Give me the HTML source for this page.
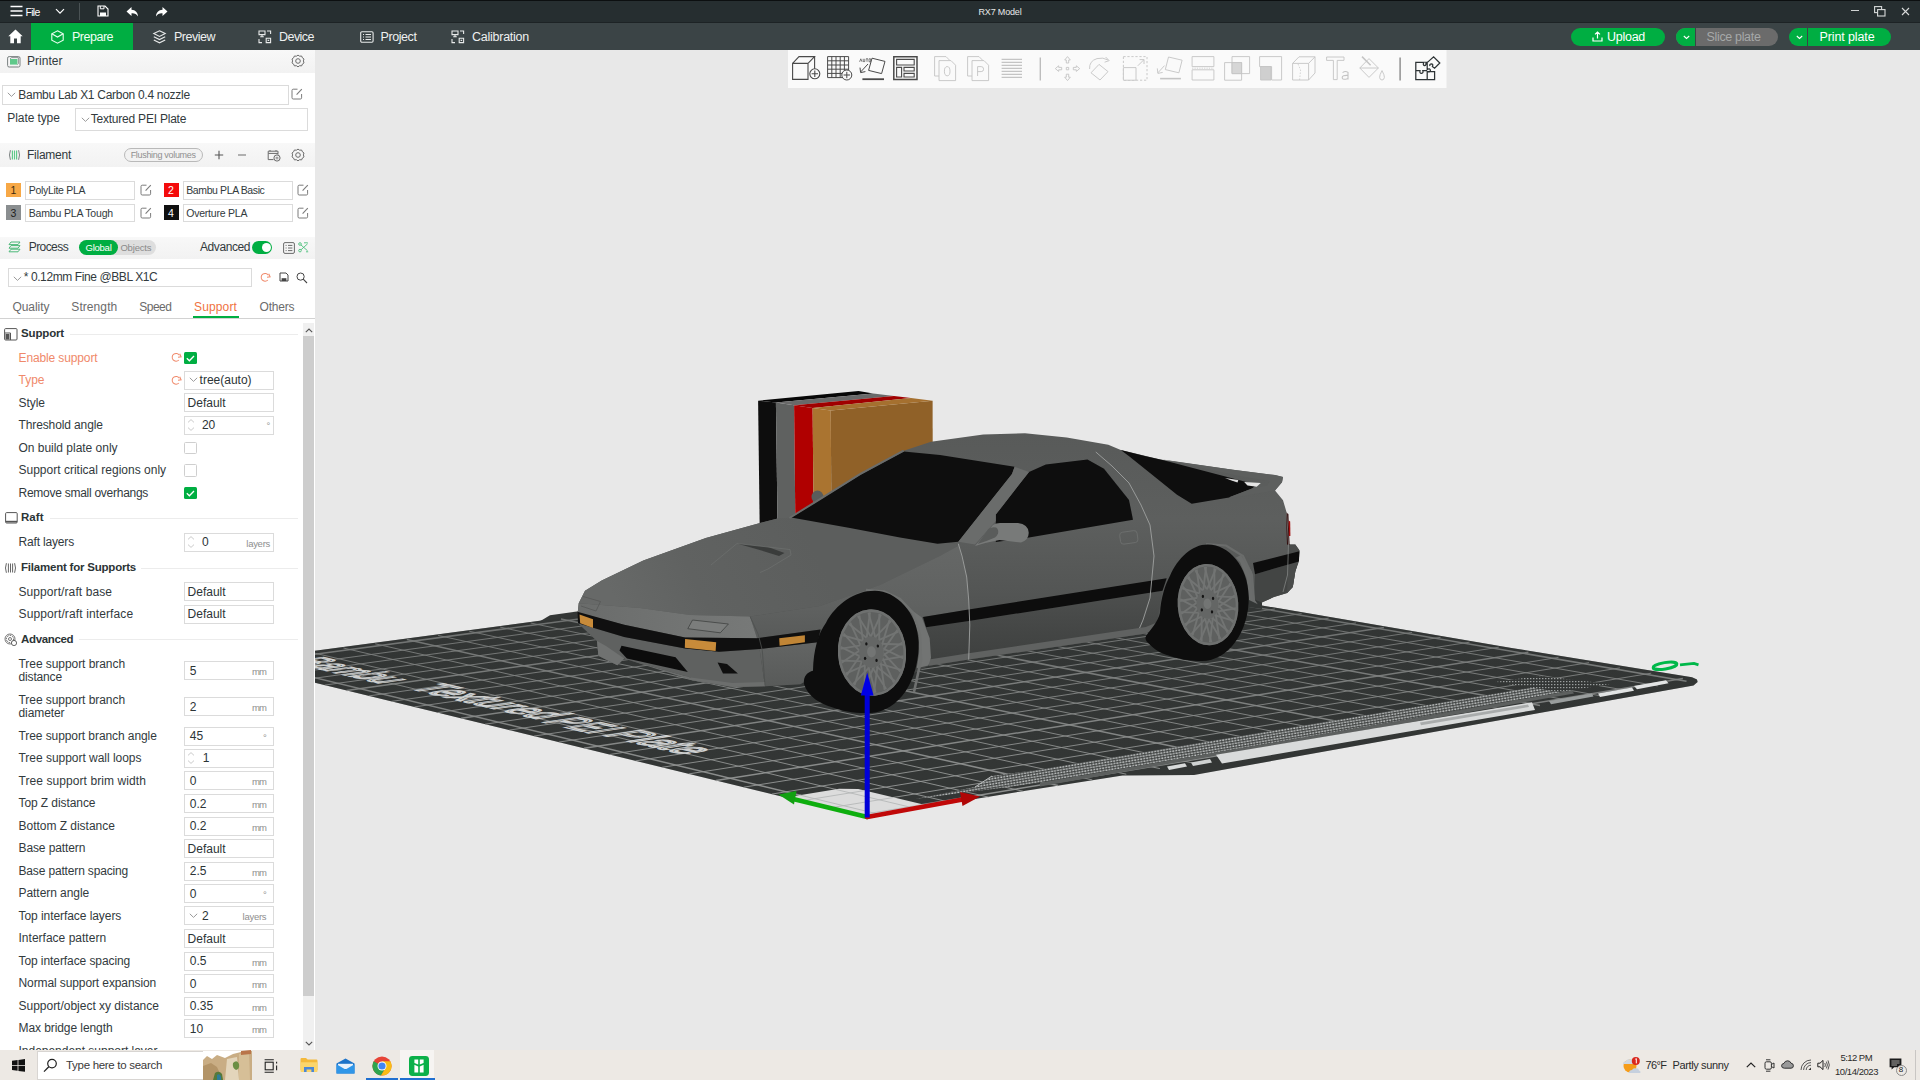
<!DOCTYPE html>
<html><head><meta charset="utf-8"><title>RX7 Model</title><style>html,body{margin:0;padding:0;}
body{width:1920px;height:1080px;overflow:hidden;position:relative;background:#e8e8e8;font-family:"Liberation Sans",sans-serif;}
.b{position:absolute;display:block;}
.t{position:absolute;white-space:nowrap;}
svg{overflow:visible;}
#side{position:absolute;left:0;top:0;width:315px;height:1050px;overflow:hidden;}
</style></head><body>
<svg class="b" style="left:315px;top:50px;overflow:hidden" width="1605" height="1000" viewBox="315 50 1605 1000"><defs><pattern id="dots" width="3" height="2.6" patternUnits="userSpaceOnUse" patternTransform="rotate(-9.5)"><rect width="3" height="2.6" fill="#3c3f3e"/><rect x="0.3" y="0.3" width="2" height="1.5" fill="#c3c6c6"/></pattern><pattern id="dots2" width="3" height="3" patternUnits="userSpaceOnUse"><rect width="3" height="3" fill="#333635"/><rect x="0" y="0" width="1.4" height="1.2" fill="#9a9e9e"/></pattern><linearGradient id="body" x1="0" y1="430" x2="0" y2="680" gradientUnits="userSpaceOnUse"><stop offset="0" stop-color="#585a59"/><stop offset="0.36" stop-color="#5d5f5e"/><stop offset="0.66" stop-color="#535554"/><stop offset="0.8" stop-color="#4b4d4c"/><stop offset="1" stop-color="#404241"/></linearGradient><linearGradient id="hood" x1="800" y1="520" x2="620" y2="610" gradientUnits="userSpaceOnUse"><stop offset="0" stop-color="#5c5e5d"/><stop offset="0.6" stop-color="#606261"/><stop offset="1" stop-color="#676968"/></linearGradient><linearGradient id="fender" x1="0" y1="550" x2="0" y2="640" gradientUnits="userSpaceOnUse"><stop offset="0" stop-color="#656766"/><stop offset="0.6" stop-color="#606261"/><stop offset="1" stop-color="#585a59"/></linearGradient><linearGradient id="bside" x1="0" y1="642" x2="0" y2="686" gradientUnits="userSpaceOnUse"><stop offset="0" stop-color="#636564"/><stop offset="1" stop-color="#585a59"/></linearGradient><linearGradient id="sidelow" x1="0" y1="590" x2="0" y2="660" gradientUnits="userSpaceOnUse"><stop offset="0" stop-color="#4e504f"/><stop offset="0.6" stop-color="#444645"/><stop offset="1" stop-color="#3e403f"/></linearGradient><linearGradient id="fascia" x1="580" y1="0" x2="757" y2="0" gradientUnits="userSpaceOnUse"><stop offset="0" stop-color="#6a6c6b"/><stop offset="0.5" stop-color="#717372"/><stop offset="1" stop-color="#777978"/></linearGradient><linearGradient id="fog" x1="0" y1="560" x2="0" y2="820" gradientUnits="userSpaceOnUse"><stop offset="0" stop-color="#303332" stop-opacity="0.5"/><stop offset="0.45" stop-color="#313433" stop-opacity="0.3"/><stop offset="1" stop-color="#333635" stop-opacity="0.05"/></linearGradient></defs><rect x="315" y="50" width="1605" height="1000" fill="#e8e8e8"/><polygon points="867.0,817.3 978.0,798.5 1040.0,788.5 1122.5,775.5 1194.0,775.0 1400.0,738.0 1693.5,685.5 1697.6,682.0 1697.0,679.5 1692.0,677.3 1511.5,648.0 995.0,560.0 230.0,662.0 867.0,817.3" fill="#333635" /><polygon points="540.0,621.2 550.0,615.2 577.0,611.6 700.0,596.0 700.0,605.0" fill="#333635" /><g stroke="#a2a4a3" stroke-opacity="0.9"><line x1="881.5" y1="814.9" x2="246.2" y2="661.0" stroke-width="1.5"/><line x1="858.4" y1="815.2" x2="1682.9" y2="678.6" stroke-width="1.5"/><line x1="917.5" y1="808.9" x2="278.9" y2="656.6" stroke-width="1"/><line x1="829.0" y1="808.0" x2="1651.2" y2="673.2" stroke-width="1"/><line x1="953.2" y1="803.0" x2="311.2" y2="652.3" stroke-width="1"/><line x1="800.1" y1="801.0" x2="1619.9" y2="667.9" stroke-width="1"/><line x1="988.5" y1="797.1" x2="343.4" y2="648.0" stroke-width="1"/><line x1="771.7" y1="794.1" x2="1589.0" y2="662.6" stroke-width="1"/><line x1="1023.4" y1="791.3" x2="375.2" y2="643.8" stroke-width="1"/><line x1="743.6" y1="787.2" x2="1558.5" y2="657.4" stroke-width="1"/><line x1="1058.0" y1="785.6" x2="406.8" y2="639.6" stroke-width="1.5"/><line x1="716.0" y1="780.5" x2="1528.4" y2="652.3" stroke-width="1.5"/><line x1="1092.3" y1="779.9" x2="438.1" y2="635.4" stroke-width="1"/><line x1="688.8" y1="773.9" x2="1498.8" y2="647.2" stroke-width="1"/><line x1="1126.3" y1="774.2" x2="469.2" y2="631.2" stroke-width="1"/><line x1="662.0" y1="767.3" x2="1469.5" y2="642.2" stroke-width="1"/><line x1="1159.9" y1="768.6" x2="500.1" y2="627.1" stroke-width="1"/><line x1="635.6" y1="760.9" x2="1440.6" y2="637.3" stroke-width="1"/><line x1="1193.3" y1="763.1" x2="530.7" y2="623.0" stroke-width="1"/><line x1="609.6" y1="754.5" x2="1412.1" y2="632.4" stroke-width="1"/><line x1="1226.3" y1="757.6" x2="561.0" y2="619.0" stroke-width="1.5"/><line x1="584.0" y1="748.3" x2="1383.9" y2="627.6" stroke-width="1.5"/><line x1="1259.0" y1="752.2" x2="591.1" y2="615.0" stroke-width="1"/><line x1="558.7" y1="742.1" x2="1356.1" y2="622.9" stroke-width="1"/><line x1="1291.4" y1="746.8" x2="621.0" y2="611.0" stroke-width="1"/><line x1="533.8" y1="736.1" x2="1328.7" y2="618.2" stroke-width="1"/><line x1="1323.4" y1="741.5" x2="650.6" y2="607.0" stroke-width="1"/><line x1="509.2" y1="730.1" x2="1301.6" y2="613.6" stroke-width="1"/><line x1="1355.2" y1="736.2" x2="680.1" y2="603.1" stroke-width="1"/><line x1="485.0" y1="724.2" x2="1274.9" y2="609.0" stroke-width="1"/><line x1="1386.7" y1="731.0" x2="709.2" y2="599.2" stroke-width="1.5"/><line x1="461.1" y1="718.3" x2="1248.5" y2="604.5" stroke-width="1.5"/><line x1="1418.0" y1="725.8" x2="738.2" y2="595.3" stroke-width="1"/><line x1="437.6" y1="712.6" x2="1222.4" y2="600.0" stroke-width="1"/><line x1="1448.9" y1="720.6" x2="766.9" y2="591.5" stroke-width="1"/><line x1="414.4" y1="706.9" x2="1196.7" y2="595.6" stroke-width="1"/><line x1="1479.5" y1="715.5" x2="795.4" y2="587.7" stroke-width="1"/><line x1="391.4" y1="701.4" x2="1171.2" y2="591.3" stroke-width="1"/><line x1="1509.9" y1="710.5" x2="823.7" y2="583.9" stroke-width="1"/><line x1="368.9" y1="695.9" x2="1146.1" y2="587.0" stroke-width="1"/><line x1="1540.0" y1="705.5" x2="851.8" y2="580.2" stroke-width="1.5"/><line x1="346.6" y1="690.4" x2="1121.3" y2="582.8" stroke-width="1.5"/><line x1="1569.8" y1="700.5" x2="879.7" y2="576.4" stroke-width="1"/><line x1="324.6" y1="685.1" x2="1096.8" y2="578.6" stroke-width="1"/><line x1="1599.4" y1="695.6" x2="907.3" y2="572.8" stroke-width="1"/><line x1="302.9" y1="679.8" x2="1072.6" y2="574.5" stroke-width="1"/><line x1="1628.7" y1="690.8" x2="934.8" y2="569.1" stroke-width="1"/><line x1="281.5" y1="674.6" x2="1048.6" y2="570.4" stroke-width="1"/><line x1="1657.7" y1="685.9" x2="962.0" y2="565.5" stroke-width="1"/><line x1="260.4" y1="669.4" x2="1025.0" y2="566.3" stroke-width="1"/><line x1="1686.5" y1="681.2" x2="989.1" y2="561.8" stroke-width="1.5"/><line x1="239.5" y1="664.3" x2="1001.6" y2="562.4" stroke-width="1.5"/></g><polygon points="867.0,817.3 978.0,798.5 1040.0,788.5 1122.5,775.5 1194.0,775.0 1400.0,738.0 1693.5,685.5 1697.6,682.0 1697.0,679.5 1692.0,677.3 1511.5,648.0 995.0,560.0 230.0,662.0 867.0,817.3" fill="url(#fog)" /><polygon points="867.0,817.3 931.8,806.5 858.3,789.1 839.1,788.8 785.6,797.4" fill="#dcdcdc" /><g stroke="#b5b8b8" stroke-width="0.9"><line x1="881.5" y1="814.9" x2="799.9" y2="795.1"/><line x1="917.5" y1="808.9" x2="835.5" y2="789.4"/><line x1="858.4" y1="815.2" x2="923.1" y2="804.5"/><line x1="829.0" y1="808.0" x2="893.5" y2="797.5"/><line x1="800.1" y1="801.0" x2="864.4" y2="790.6"/></g><polygon points="915.0,799.0 975.0,787.0 992.0,776.0 1040.0,769.4 1400.0,709.4 1560.0,683.0 1572.0,690.5 1400.0,720.8 1040.0,782.8" fill="url(#dots)" /><polyline points="975.0,787.0 992.0,776.0" fill="none" stroke="#b9bcbc" stroke-width="1" /><polygon points="1167.0,766.5 1185.0,763.3 1187.0,766.6 1169.0,770.0" fill="#d8dada" /><polygon points="1191.0,762.5 1210.0,759.0 1212.0,762.6 1193.0,766.0" fill="#cfd2d2" /><polygon points="1040.0,782.8 1400.0,720.8 1572.0,690.5 1574.0,693.5 1400.0,724.3 1216.0,755.5 1040.0,786.5" fill="#5d605f" /><polygon points="1216.0,754.8 1532.0,702.2 1535.0,710.0 1400.0,733.0 1222.0,763.5" fill="#d9dbdb" /><polygon points="1420.0,722.5 1528.0,704.5 1529.0,707.0 1421.0,725.3" fill="#a9acac" /><polygon points="1549.0,701.0 1592.0,693.5 1593.5,696.5 1551.0,704.2" fill="#9a9e9e" /><polygon points="1598.0,693.5 1632.0,687.6 1634.0,690.8 1600.0,697.0" fill="#e2e4e4" /><polygon points="1634.0,686.0 1666.0,680.3 1668.5,683.3 1637.0,689.3" fill="#e2e4e4" /><polygon points="1540.0,676.0 1610.0,684.0 1560.0,692.0 1495.0,682.0" fill="url(#dots2)" /><text transform="matrix(2.1584 0.5165 -3.2936 0.4492 286.68 661.29)" font-family="Liberation Sans, sans-serif" font-size="15" textLength="43.4" lengthAdjust="spacingAndGlyphs" fill="none" stroke="#dcdede" stroke-width="0.95" stroke-opacity="0.92">Bambu</text><text transform="matrix(2.3410 0.5589 -3.3661 0.4810 407.30 688.33)" font-family="Liberation Sans, sans-serif" font-size="15" textLength="56.0" lengthAdjust="spacingAndGlyphs" fill="none" stroke="#dcdede" stroke-width="0.95" stroke-opacity="0.92">Textured</text><text transform="matrix(2.4767 0.5923 -3.4226 0.5059 540.70 721.64)" font-family="Liberation Sans, sans-serif" font-size="15" textLength="20.7" lengthAdjust="spacingAndGlyphs" fill="none" stroke="#dcdede" stroke-width="0.95" stroke-opacity="0.92">PEI</text><text transform="matrix(2.5828 0.6168 -3.4579 0.5242 601.33 734.94)" font-family="Liberation Sans, sans-serif" font-size="15" textLength="32.3" lengthAdjust="spacingAndGlyphs" fill="none" stroke="#dcdede" stroke-width="0.95" stroke-opacity="0.92">Plate</text><ellipse cx="1665" cy="665.8" rx="12" ry="3.2" transform="rotate(-9 1665 665.8)" fill="none" stroke="#00b84a" stroke-width="3"/><path d="M1680 664.8L1694 663.4L1698.5 664.8" fill="none" stroke="#00b84a" stroke-width="2.8"/><polyline points="867.2,817.0 790.0,798.3" fill="none" stroke="#0eae0e" stroke-width="4.6" stroke-linecap="round"/><polygon points="778.5,794.6 796.5,791.0 794.0,804.5" fill="#12a012" /><polyline points="867.2,817.0 964.0,799.2" fill="none" stroke="#c00808" stroke-width="4.6" stroke-linecap="round"/><polygon points="980.0,796.5 960.0,792.0 962.5,806.0" fill="#b00606" /><polygon points="758.1,400.7 775.9,402.5 777.7,535.0 759.8,535.0" fill="#0d0d0d" /><polygon points="775.9,402.5 794.1,405.2 795.5,535.0 777.7,535.0" fill="#5f6160" /><polygon points="794.1,405.2 812.6,408.1 813.8,535.0 795.5,535.0" fill="#b00000" /><polygon points="812.6,408.1 830.7,410.4 831.6,535.0 813.8,535.0" fill="#aa7430" /><polygon points="830.7,410.4 932.6,400.7 932.9,535.0 831.6,535.0" fill="#906128" /><polygon points="758.1,400.7 858.5,391.1 873.3,393.6 775.9,402.5" fill="#070707" /><polygon points="775.9,402.5 873.3,393.6 894.0,395.9 794.1,405.2" fill="#696969" /><polygon points="794.1,405.2 894.0,395.9 911.0,398.0 812.6,408.1" fill="#a00000" /><polygon points="812.6,408.1 911.0,398.0 932.6,400.7 830.7,410.4" fill="#a5702f" /><ellipse cx="817.5" cy="497" rx="6" ry="6.5" fill="#5a5c5b"/><polygon points="577.7,612.7 578.7,603.3 585.0,590.8 601.7,580.4 643.3,560.5 705.8,538.0 760.0,522.9 777.7,518.5 791.2,517.5 818.0,501.0 860.0,474.0 903.7,450.8 931.0,441.7 983.3,434.6 1025.0,433.3 1066.7,437.5 1108.3,444.8 1120.8,450.0 1160.4,459.4 1233.0,469.8 1275.0,475.0 1283.0,477.0 1282.0,482.3 1275.0,490.5 1283.0,500.2 1286.6,512.4 1288.7,530.8 1288.2,544.6 1295.3,544.6 1299.4,550.2 1298.9,559.4 1295.3,571.6 1292.8,586.9 1287.1,593.0 1273.9,597.1 1257.8,604.3 1254.0,601.0 1215.0,640.0 1156.0,628.3 1145.8,633.5 968.7,659.6 929.0,665.8 880.0,690.0 816.2,665.8 809.7,678.8 800.2,684.3 765.0,686.3 732.5,687.0 691.9,680.2 690.5,677.5 624.2,658.5 617.4,665.3 598.4,655.8 597.0,641.0 578.1,623.3" fill="url(#body)" /><polygon points="578.7,603.3 585.0,590.8 601.7,580.4 643.3,560.5 705.8,538.0 760.0,522.9 777.7,518.5 791.2,517.5 960.0,545.0 940.0,556.0 880.0,585.0 820.0,606.0 750.0,616.5 690.0,615.0 640.0,608.0" fill="url(#hood)" /><polygon points="960.0,545.0 940.0,556.0 880.0,585.0 820.0,606.0 750.0,616.5 756.9,638.2 820.5,629.4 923.0,616.9 968.7,609.6 966.7,577.0 958.3,543.7" fill="url(#fender)" /><polygon points="577.7,612.7 578.7,603.3 640.0,608.0 690.0,615.0 750.0,616.5 757.0,638.2 685.1,637.5 624.2,624.7" fill="url(#fascia)" /><polygon points="692.5,620.0 728.4,624.0 720.3,632.8 687.8,628.7" fill="#7b7d7c" /><polygon points="578.1,623.3 624.2,636.9 685.1,648.4 719.0,651.8 759.6,649.0 765.0,686.3 732.5,687.0 691.9,680.2 690.5,677.5 624.2,658.5 617.4,665.3 598.4,655.8 597.0,641.0" fill="#5f6160" /><polygon points="759.6,649.0 817.8,642.3 816.2,665.8 809.7,678.8 800.2,684.3 765.0,686.3" fill="url(#bside)" /><polygon points="624.2,658.5 690.5,677.5 732.5,683.0 765.0,682.0 765.0,686.3 732.5,687.0 691.9,680.2" fill="#6c6e6d" /><polygon points="926.0,627.3 968.7,621.0 1162.5,590.8 1156.0,628.3 1145.8,633.5 968.7,659.6 929.0,665.8" fill="url(#sidelow)" /><polygon points="929.0,659.5 968.7,653.2 1145.8,627.0 1158.0,622.0 1156.0,628.3 1145.8,633.5 968.7,659.6 929.0,665.8" fill="#606261" /><polygon points="1255.0,574.2 1298.9,561.4 1295.3,571.6 1292.8,586.9 1287.1,593.0 1273.9,597.1 1257.8,604.3 1254.0,601.0" fill="#434544" /><polygon points="1248.0,597.0 1262.0,602.5 1262.0,609.0 1248.0,607.0" fill="#333635" /><polygon points="1288.2,544.6 1295.3,544.6 1299.4,550.2 1298.9,559.4 1295.3,571.6 1292.8,586.9 1287.1,593.0 1287.5,575.0" fill="#4a4c4b" /><polygon points="791.2,517.5 818.0,501.0 860.0,475.0 903.7,451.5 940.0,455.0 1014.6,466.7 1012.0,474.0 958.3,541.7 937.5,543.7 900.0,537.5 850.0,528.0" fill="#0e0e0e" /><polyline points="789.5,518.0 818.0,500.3 860.0,474.2 903.7,450.6" fill="none" stroke="#6a6c6b" stroke-width="2" /><polygon points="1087.5,459.4 1104.0,468.7 1129.0,500.0 1133.0,519.8 1029.0,537.5 995.8,542.0 995.8,514.6 1029.0,471.9 1045.8,464.6" fill="#0e0e0e" /><polygon points="1120.8,450.0 1145.8,456.2 1162.5,460.0 1241.6,480.8 1256.2,485.0 1252.0,488.5 1229.1,497.5 1191.7,503.7 1177.0,494.8 1150.0,472.9 1129.1,456.2" fill="#0e0e0e" /><polygon points="1162.5,459.4 1233.0,469.8 1275.0,475.0 1283.0,477.0 1282.0,482.3 1275.0,490.5 1231.0,498.0 1229.0,497.2 1252.0,488.5 1267.0,485.5 1270.0,481.0 1241.6,476.5" fill="#5d5f5e" /><polygon points="1225.0,477.9 1238.3,480.0 1237.5,482.6 1230.8,480.2" fill="#dedede" /><polygon points="1244.2,482.1 1260.8,482.9 1256.7,486.7 1247.5,485.4" fill="#e4e4e4" /><polygon points="1014.6,466.7 1029.0,471.9 995.8,514.6 995.8,521.0 975.0,544.5 958.3,541.7 1012.0,474.0" fill="#6a6c6b" /><path d="M975 546L993 525Q996 523 1000 523L1018 523Q1028 524 1028.7 532.5Q1029 540 1021 542.5Q1008 541 999.4 540Q988 542 975 546Z" fill="#787a79"/><path d="M977.5 544L988.7 528.7Q992 526.5 996.2 527.5Q999 530 998 533.5Q997 536 995 537.5Q986 541.5 977.5 544Z" fill="#5a5c5b"/><polygon points="1286.0,512.4 1288.4,514.0 1289.6,545.0 1287.0,544.6" fill="#2a0606" /><polygon points="1288.6,520.6 1290.2,521.5 1290.4,536.0 1288.9,536.0" fill="#a00e0e" /><polygon points="923.0,616.9 968.7,609.6 1166.7,578.3 1162.5,590.8 968.7,621.0 926.0,627.3" fill="#0d0d0d" /><polygon points="1253.0,563.0 1299.4,551.2 1298.9,561.4 1255.0,574.2" fill="#0d0d0d" /><polygon points="577.4,611.8 624.2,624.7 685.1,637.5 756.9,638.2 820.5,629.4 817.8,642.3 759.6,649.0 719.0,651.8 685.1,648.4 624.2,636.9 578.1,623.3" fill="#101010" /><polygon points="579.5,614.5 593.0,619.3 593.0,628.0 580.2,623.3" fill="#c88b3a" /><polygon points="685.1,638.9 716.2,642.3 715.6,651.1 684.8,647.7" fill="#c88b3a" /><polygon points="779.2,638.2 804.9,635.2 804.9,642.3 779.6,645.7" fill="#c08536" /><polygon points="621.5,645.7 675.6,657.2 687.8,672.1 626.9,658.5 619.5,650.5" fill="#0c0c0c" /><polygon points="717.6,662.6 727.0,664.0 737.9,673.4 723.0,673.4" fill="#0f0f0f" /><polygon points="597.0,641.0 606.0,646.0 624.2,658.5 617.4,665.3 598.4,655.8" fill="#707271" /><polyline points="692.5,620.0 728.4,624.0 720.3,632.8 687.8,628.7 692.5,620.0" fill="none" stroke="#3f4140" stroke-width="0.8" /><polyline points="583.0,596.5 600.5,601.5 596.0,611.0 581.0,606.0" fill="none" stroke="#555756" stroke-width="0.8" /><polygon points="737.0,543.5 768.0,547.0 784.5,553.0 779.0,556.0 758.0,549.5" fill="#3a3c3b" /><polyline points="711.0,565.0 737.0,543.5 790.0,549.5 791.0,555.0 768.0,569.0 760.0,572.5" fill="none" stroke="#6c6e6d" stroke-width="0.8" /><polyline points="958.3,543.7 962.0,556.0 966.7,577.0 968.7,600.0 969.8,625.0 968.7,659.6" fill="none" stroke="#9fa1a0" stroke-width="0.9" /><polyline points="1095.8,452.0 1112.0,466.0 1129.0,483.0 1141.0,505.0 1150.0,525.0 1154.0,556.0 1150.0,598.0 1143.0,620.0 1139.6,628.0" fill="none" stroke="#9fa1a0" stroke-width="0.9" /><polyline points="750.1,616.6 758.2,634.2 762.3,650.4 765.0,685.6" fill="none" stroke="#4d4f4e" stroke-width="0.8" /><polyline points="1286.6,512.4 1288.5,545.0 1287.5,575.0 1283.0,592.0" fill="none" stroke="#8a8c8b" stroke-width="0.7" /><rect x="1120" y="531.5" width="17.5" height="12" rx="3" fill="none" stroke="#6f7170" stroke-width="0.8" transform="rotate(-8 1128 537)"/><polygon points="905.0,603.0 912.8,611.1 921.9,617.6 929.7,638.3 931.0,657.8 928.4,665.6 916.7,668.2 919.3,651.3 918.6,631.9 913.0,613.0" fill="#727473" /><polygon points="1228.0,550.0 1235.6,557.8 1241.0,555.0 1252.0,571.7 1254.5,599.4 1257.8,604.3 1249.0,600.0 1248.7,596.7 1246.7,578.6 1240.0,562.0" fill="#6b6d6c" /><polyline points="914.0,692.0 921.0,660.0 920.0,635.0 913.0,613.0 900.0,599.0 884.0,591.5 866.0,590.0" fill="none" stroke="#6f7170" stroke-width="2.6" /><polyline points="1254.0,601.0 1252.0,575.0 1243.0,556.0 1226.0,545.5 1206.0,544.0" fill="none" stroke="#6a6c6b" stroke-width="2.2" /><path d="M875 590.8C896 591 917.5 612 918.6 642C919.5 680 899 712 870 713C855 713.5 842 711 833 707.5C820 703.5 808 697 804 684C803 676 808 672 813 670.8C813.5 650 818 634 826 622.8C836 604 855 590.6 875 590.8Z" fill="#0d0d0d"/><g transform="rotate(-4 872 652.6)"><ellipse cx="872" cy="652.6" rx="34" ry="43.2" fill="#5e605f"/><g stroke="#727473" stroke-width="1.9"><line x1="882.2" y1="652.6" x2="899.0" y2="631.6"/><line x1="882.2" y1="652.6" x2="899.0" y2="673.6"/><line x1="881.6" y1="657.0" x2="903.0" y2="644.6"/><line x1="881.6" y1="657.0" x2="891.7" y2="684.0"/><line x1="879.8" y1="660.9" x2="903.3" y2="658.5"/><line x1="879.8" y1="660.9" x2="882.0" y2="690.7"/><line x1="877.1" y1="663.8" x2="899.8" y2="671.8"/><line x1="877.1" y1="663.8" x2="871.2" y2="692.8"/><line x1="873.8" y1="665.4" x2="893.0" y2="682.7"/><line x1="873.8" y1="665.4" x2="860.4" y2="690.0"/><line x1="870.2" y1="665.4" x2="883.6" y2="690.0"/><line x1="870.2" y1="665.4" x2="851.0" y2="682.7"/><line x1="866.9" y1="663.8" x2="872.8" y2="692.8"/><line x1="866.9" y1="663.8" x2="844.2" y2="671.8"/><line x1="864.2" y1="660.9" x2="862.0" y2="690.7"/><line x1="864.2" y1="660.9" x2="840.7" y2="658.5"/><line x1="862.4" y1="657.0" x2="852.3" y2="684.0"/><line x1="862.4" y1="657.0" x2="841.0" y2="644.6"/><line x1="861.8" y1="652.6" x2="845.0" y2="673.6"/><line x1="861.8" y1="652.6" x2="845.0" y2="631.6"/><line x1="862.4" y1="648.2" x2="841.0" y2="660.6"/><line x1="862.4" y1="648.2" x2="852.3" y2="621.2"/><line x1="864.2" y1="644.3" x2="840.7" y2="646.7"/><line x1="864.2" y1="644.3" x2="862.0" y2="614.5"/><line x1="866.9" y1="641.4" x2="844.2" y2="633.4"/><line x1="866.9" y1="641.4" x2="872.8" y2="612.4"/><line x1="870.2" y1="639.8" x2="851.0" y2="622.5"/><line x1="870.2" y1="639.8" x2="883.6" y2="615.2"/><line x1="873.8" y1="639.8" x2="860.4" y2="615.2"/><line x1="873.8" y1="639.8" x2="893.0" y2="622.5"/><line x1="877.1" y1="641.4" x2="871.2" y2="612.4"/><line x1="877.1" y1="641.4" x2="899.8" y2="633.4"/><line x1="879.8" y1="644.3" x2="882.0" y2="614.5"/><line x1="879.8" y1="644.3" x2="903.3" y2="646.7"/><line x1="881.6" y1="648.2" x2="891.7" y2="621.2"/><line x1="881.6" y1="648.2" x2="903.0" y2="660.6"/></g><ellipse cx="872" cy="652.6" rx="32.8" ry="42" fill="none" stroke="#6e706f" stroke-width="2.6"/><ellipse cx="871.5" cy="652.1" rx="12.24" ry="15.552" fill="#646665"/><ellipse cx="871.5" cy="651.8" rx="4.42" ry="5.616" fill="#737574"/><ellipse cx="876.0" cy="660.7" rx="1.2" ry="1.6" fill="#151515"/><ellipse cx="864.7" cy="657.8" rx="1.2" ry="1.6" fill="#151515"/><ellipse cx="867.0" cy="643.5" rx="1.2" ry="1.6" fill="#151515"/><ellipse cx="878.3" cy="646.4" rx="1.2" ry="1.6" fill="#151515"/></g><path d="M1208 544.6C1229 545 1248 566 1248.7 596.5C1249.3 632 1228 661 1202 661C1192 661 1182 659.8 1175.8 657.8C1166 655 1157 651.5 1153.6 648C1148 643 1144 640 1146 636C1150 630 1158 622 1160 613C1161 598 1165 585 1170 575.8C1178 558 1192 544.4 1208 544.6Z" fill="#0d0d0d"/><g transform="rotate(-4 1208 604.6)"><ellipse cx="1208" cy="604.6" rx="30.2" ry="40.6" fill="#5e605f"/><g stroke="#727473" stroke-width="1.9"><line x1="1217.1" y1="604.6" x2="1231.9" y2="584.9"/><line x1="1217.1" y1="604.6" x2="1231.9" y2="624.3"/><line x1="1216.5" y1="608.8" x2="1235.5" y2="597.1"/><line x1="1216.5" y1="608.8" x2="1225.5" y2="634.2"/><line x1="1214.9" y1="612.4" x2="1235.8" y2="610.2"/><line x1="1214.9" y1="612.4" x2="1216.9" y2="640.4"/><line x1="1212.5" y1="615.1" x2="1232.7" y2="622.6"/><line x1="1212.5" y1="615.1" x2="1207.3" y2="642.3"/><line x1="1209.6" y1="616.6" x2="1226.6" y2="632.9"/><line x1="1209.6" y1="616.6" x2="1197.7" y2="639.7"/><line x1="1206.4" y1="616.6" x2="1218.3" y2="639.7"/><line x1="1206.4" y1="616.6" x2="1189.4" y2="632.9"/><line x1="1203.5" y1="615.1" x2="1208.7" y2="642.3"/><line x1="1203.5" y1="615.1" x2="1183.3" y2="622.6"/><line x1="1201.1" y1="612.4" x2="1199.1" y2="640.4"/><line x1="1201.1" y1="612.4" x2="1180.2" y2="610.2"/><line x1="1199.5" y1="608.8" x2="1190.5" y2="634.2"/><line x1="1199.5" y1="608.8" x2="1180.5" y2="597.1"/><line x1="1198.9" y1="604.6" x2="1184.1" y2="624.3"/><line x1="1198.9" y1="604.6" x2="1184.1" y2="584.9"/><line x1="1199.5" y1="600.4" x2="1180.5" y2="612.1"/><line x1="1199.5" y1="600.4" x2="1190.5" y2="575.0"/><line x1="1201.1" y1="596.8" x2="1180.2" y2="599.0"/><line x1="1201.1" y1="596.8" x2="1199.1" y2="568.8"/><line x1="1203.5" y1="594.1" x2="1183.3" y2="586.6"/><line x1="1203.5" y1="594.1" x2="1208.7" y2="566.9"/><line x1="1206.4" y1="592.6" x2="1189.4" y2="576.3"/><line x1="1206.4" y1="592.6" x2="1218.3" y2="569.5"/><line x1="1209.6" y1="592.6" x2="1197.7" y2="569.5"/><line x1="1209.6" y1="592.6" x2="1226.6" y2="576.3"/><line x1="1212.5" y1="594.1" x2="1207.3" y2="566.9"/><line x1="1212.5" y1="594.1" x2="1232.7" y2="586.6"/><line x1="1214.9" y1="596.8" x2="1216.9" y2="568.8"/><line x1="1214.9" y1="596.8" x2="1235.8" y2="599.0"/><line x1="1216.5" y1="600.4" x2="1225.5" y2="575.0"/><line x1="1216.5" y1="600.4" x2="1235.5" y2="612.1"/></g><ellipse cx="1208" cy="604.6" rx="29" ry="39.4" fill="none" stroke="#6e706f" stroke-width="2.6"/><ellipse cx="1207.5" cy="604.1" rx="10.872" ry="14.616" fill="#646665"/><ellipse cx="1207.5" cy="603.8" rx="3.926" ry="5.278" fill="#737574"/><ellipse cx="1211.5" cy="612.2" rx="1.2" ry="1.6" fill="#151515"/><ellipse cx="1201.5" cy="609.5" rx="1.2" ry="1.6" fill="#151515"/><ellipse cx="1203.5" cy="596.0" rx="1.2" ry="1.6" fill="#151515"/><ellipse cx="1213.5" cy="598.7" rx="1.2" ry="1.6" fill="#151515"/></g><rect x="864.7" y="693" width="5" height="124.5" fill="#0000d8"/><polygon points="867.2,672.5 860.8,695.5 873.6,695.5" fill="#0000e6" /><rect x="788" y="50" width="658.5" height="38" fill="#fafafa"/><g transform="translate(792,56)" stroke="#4a4a4a" stroke-width="1.1" fill="none"><path d="M0.6 7.4H16V23.4H0.6Z M0.6 7.4L7 0.6H22.6L16 7.4 M22.6 0.6V13"/><circle cx="22.8" cy="17.8" r="5" fill="#fafafa"/><path d="M22.8 14.6V21 M19.6 17.8H26"/></g><g transform="translate(827,56)" stroke="#4a4a4a" stroke-width="1" fill="none"><path d="M0.6 0.6H21.6V21.6H0.6Z M0.6 4.8H21.6 M0.6 9H21.6 M0.6 13.2H21.6 M0.6 17.4H21.6 M4.8 0.6V21.6 M9 0.6V21.6 M13.2 0.6V21.6 M17.4 0.6V21.6"/><circle cx="19.8" cy="19" r="5" fill="#fafafa"/><path d="M19.8 15.8V22.2 M16.6 19H23"/></g><g transform="translate(859,56)" stroke="#4a4a4a" stroke-width="1" fill="none"><path d="M13 2.2L26 5.4L22.6 17.6L9.6 14.4Z"/><path d="M9 8L1.6 16 M1 11.6L1.6 16.6L6.4 15.6" /><path d="M3.4 23.2H25" stroke-width="1.8"/><path d="M0.6 5.8L1.8 2.8L3 5.8 M4.2 2.8V5.6H5.8V2.8 M7 2.8H9 M8 2.8V5.8 M10 2.8H11.6V5.8H10Z" stroke-width="0.7"/></g><g transform="translate(893,56)" stroke="#4a4a4a" stroke-width="1.1" fill="none"><path d="M0.8 0.8H24V23.6H0.8Z" stroke-width="1.5"/><path d="M3.6 3.4H21.2V9H3.6Z M3.6 11.4H8.6V21H3.6Z M11 11.4H21.2V15H11Z M11 17.4H21.2V21H11Z"/></g><g transform="translate(934,56)" stroke="#c4c4c4" stroke-width="0.9" fill="none"><path d="M0.6 0.6H12L15.6 4.2V20H0.6Z"/><path d="M5 4.6H17L21.6 9.2V24.6H5Z" fill="#fafafa"/><ellipse cx="13.2" cy="15.2" rx="2.8" ry="4.6"/></g><g transform="translate(967,56)" stroke="#c4c4c4" stroke-width="0.9" fill="none"><path d="M0.6 0.6H12L15.6 4.2V20H0.6Z"/><path d="M5 4.6H17L21.6 9.2V24.6H5Z" fill="#fafafa"/><path d="M10.6 20V10.6H14.2Q16.6 10.6 16.6 13.2Q16.6 15.6 14.2 15.6H10.6"/></g><g transform="translate(1001,56)" stroke="#c4c4c4" stroke-width="1.3" fill="none"><path d="M0.6 3.4H21 M0.6 6.4H21 M0.6 9.4H21 M0.6 12.4H21 M0.6 15.4H21 M0.6 18.4H21 M0.6 21.4H21" stroke-width="1.3"/></g><rect x="1039.6" y="57.5" width="1.4" height="23" fill="#bdbdbd"/><g transform="translate(1054.5,56)" stroke="#c4c4c4" stroke-width="0.9" fill="none"><path d="M13 0.6L10.2 4H11.8V7H14.2V4H15.8Z M13 24.6L10.2 21.2H11.8V18.2H14.2V21.2H15.8Z M0.8 12.6L4.2 9.8V11.4H7.2V13.8H4.2V15.4Z M25.2 12.6L21.8 9.8V11.4H18.8V13.8H21.8V15.4Z M11.8 11.4H14.2V13.8H11.8Z"/></g><g transform="translate(1088,56)" stroke="#c4c4c4" stroke-width="0.9" fill="none"><path d="M11 8.4L20 15.6L12 24L3 16.8Z"/><path d="M1.6 13Q1 5 9 2.6Q15 1 20 4"/><path d="M17.6 1L21.2 4.6L16.6 6.2"/></g><g transform="translate(1122.8,56)" stroke="#c4c4c4" stroke-width="0.9" fill="none"><path d="M0.6 0.6H24.2V24.2H0.6Z" stroke-dasharray="2.2 1.8"/><path d="M0.6 11.6H13.2V24.2H0.6Z" fill="#fafafa"/><path d="M15 9.8L21 3.8 M16.8 3.6H21.2V8"/></g><g transform="translate(1156.5,56)" stroke="#c4c4c4" stroke-width="0.9" fill="none"><path d="M12 1L25.6 4.2L22.4 16.8L8.8 13.6Z"/><path d="M8 9.6L1.4 16.8 M0.8 12.4L1.4 17.4L6.2 16.4"/><path d="M3.6 22.6H24.4" stroke-width="1.6"/></g><g transform="translate(1191.5,56)" stroke="#c4c4c4" stroke-width="0.9" fill="none"><path d="M0.6 0.6H22.4V10.6H0.6Z M0.6 13.8H22.4V24H0.6Z"/><path d="M0.6 12.2H22.4" stroke-dasharray="1.2 1.2" stroke-width="0.7"/></g><g transform="translate(1224,56)" stroke="#c4c4c4" stroke-width="0.9" fill="none"><path d="M8 0.6H25.6V17.6H8Z"/><path d="M0.6 6.6H17.6V24.2H0.6Z"/><path d="M8 6.6H17.6V17.6H8Z" fill="#d6d6d6"/></g><g transform="translate(1259,56)" stroke="#c4c4c4" stroke-width="0.9" fill="none"><path d="M0.6 0.6H22.6V24H12.6V10.6H0.6Z"/><path d="M1.6 10.6H12V24H1.6Z" fill="#cfcfcf"/></g><g transform="translate(1292,56)" stroke="#c4c4c4" stroke-width="0.9" fill="none"><path d="M0.6 7.4H16.6V24H0.6Z M0.6 7.4L7 0.8H23L16.6 7.4 M23 0.8V17L16.6 24"/><path d="M6 8L8.6 14L7.6 24" stroke-dasharray="1.6 1.4" stroke-width="0.7"/></g><g transform="translate(1326,56)" stroke="#c4c4c4" stroke-width="0.9" fill="none"><path d="M0.6 1H18V4.4H11.2V23.6H7.4V4.4H0.6Z"/><path d="M16.6 16.6Q19.4 14.6 22 16.4V23.4 M22 19.4Q16 19 16.2 21.8Q16.6 24.4 22 22.4" stroke-width="1.1"/></g><g transform="translate(1359,56)" stroke="#c4c4c4" stroke-width="0.9" fill="none"><path d="M10 2.6L19.4 12L10 21.4L0.8 12Z"/><path d="M0.8 12H19.4"/><path d="M3 0.6L11.6 9.2" stroke-width="1.5"/><path d="M23 14.6Q20.4 19.4 20.6 21.4Q21 24 23 24Q25 24 25.4 21.4Q25.6 19.4 23 14.6Z"/></g><rect x="1399.4" y="57.5" width="1.4" height="23" fill="#8a8a8a"/><g transform="translate(1415,56)" stroke="#2d3335" stroke-width="1.2" fill="none"><path d="M0.8 6.4H9Q7.4 8.6 9.4 9.6Q11.6 9.6 10.8 6.4H12.2V13.4Q15 12 15.4 14.4Q15 16.8 12.2 15.6V23.6H0.8Z M0.8 14.6H5Q4.4 17.6 6.6 17.4Q8.6 17 7.8 14.6H12.2 M12.2 15.6H19.6V23.6H12.2" stroke-width="1.25"/><path d="M12.4 6.4L18.6 0.8L24.8 7L19.6 12.2L17.4 10.6Q18.6 8 16.2 7.8Q14.2 8.2 15 10" stroke-width="1.25"/></g></svg>
<div id="side"><div class="b" style="left:0.0px;top:50.0px;width:315.0px;height:1000.0px;background:#fff;"></div>
<div class="b" style="left:0.0px;top:50.0px;width:315.0px;height:22.7px;background:linear-gradient(#f8f8f8,#f2f2f2);"></div>
<svg class="b" style="left:7.0px;top:55.0px;" width="14" height="13" viewBox="0 0 14 13"><rect x="0.6" y="1.6" width="12.4" height="10.4" rx="1.5" stroke="#7a8080" stroke-width="1" fill="none"/><path d="M3 4H10.4V9.6H3Z" fill="#5fc98a"/><path d="M3 4L4.6 2.6H11.4V8.6L10.4 9.6" stroke="#7a8080" stroke-width="0.8" fill="none"/></svg>
<div class="t" style="left:27.0px;top:53.0px;font-size:12px;line-height:16px;color:#323a3d;letter-spacing:0.022px;">Printer</div>
<svg class="b" style="left:290.5px;top:54.0px;" width="14" height="14" viewBox="0 0 14 14"><path d="M7 0.8L8.6 1.9L10.6 1.7L11.4 3.5L13 4.7L12.4 6.6L13 8.6L11.4 9.8L10.6 11.6L8.6 11.4L7 12.6L5.4 11.4L3.4 11.6L2.6 9.8L1 8.6L1.6 6.6L1 4.7L2.6 3.5L3.4 1.7L5.4 1.9Z" transform="translate(0,0.3)" stroke="#6b6b6b" stroke-width="1" fill="none" stroke-linejoin="round"/><circle cx="7" cy="7" r="2.3" stroke="#6b6b6b" stroke-width="1" fill="none"/></svg>
<div class="b" style="left:2.0px;top:85.0px;width:286.5px;height:19.5px;background:#fff;border:1px solid #dbdbdb;box-sizing:border-box;"></div>
<svg class="b" style="left:7.0px;top:92.0px;" width="9" height="6" viewBox="0 0 9 6"><path d="M0.8 0.8L4.5 4.4L8.2 0.8" stroke="#9a9a9a" stroke-width="1" fill="none"/></svg>
<div class="t" style="left:18.3px;top:86.5px;font-size:12px;line-height:16px;color:#323a3d;letter-spacing:-0.287px;">Bambu Lab X1 Carbon 0.4 nozzle</div>
<svg class="b" style="left:291.0px;top:88.0px;" width="12" height="12" viewBox="0 0 12 12"><path d="M6.5 1.2H2.2Q1 1.2 1 2.4V9.8Q1 11 2.2 11H9.4Q10.6 11 10.6 9.8V6" stroke="#7b7b7b" stroke-width="1" fill="none"/><path d="M5.6 6.6L10.8 1.2" stroke="#7b7b7b" stroke-width="1.1"/></svg>
<div class="t" style="left:7.3px;top:110.0px;font-size:12px;line-height:16px;color:#323a3d;letter-spacing:-0.087px;">Plate type</div>
<div class="b" style="left:75.0px;top:108.0px;width:232.5px;height:22.5px;background:#fff;border:1px solid #dbdbdb;box-sizing:border-box;"></div>
<svg class="b" style="left:80.5px;top:116.5px;" width="9" height="6" viewBox="0 0 9 6"><path d="M0.8 0.8L4.5 4.4L8.2 0.8" stroke="#9a9a9a" stroke-width="1" fill="none"/></svg>
<div class="t" style="left:90.7px;top:111.0px;font-size:12px;line-height:16px;color:#323a3d;letter-spacing:-0.216px;">Textured PEI Plate</div>
<div class="b" style="left:0.0px;top:143.0px;width:315.0px;height:23.5px;background:linear-gradient(#f8f8f8,#f2f2f2);"></div>
<svg class="b" style="left:7.5px;top:148.5px;" width="13" height="12" viewBox="0 0 13 12"><path d="M2.4 1.2Q0.6 6 2.4 10.8 M10.6 1.2Q12.4 6 10.6 10.8" stroke="#7a8080" stroke-width="1" fill="none"/><path d="M4.4 1.5V10.5 M6.5 1.5V10.5 M8.6 1.5V10.5" stroke="#5fc98a" stroke-width="1.2"/></svg>
<div class="t" style="left:27.0px;top:146.5px;font-size:12px;line-height:16px;color:#323a3d;letter-spacing:-0.252px;">Filament</div>
<div class="b" style="left:124.0px;top:148.0px;width:78.5px;height:13.5px;background:#f2f2f2;border:1px solid #b9b9b9;box-sizing:border-box;border-radius:7px;"></div>
<div class="t" style="left:130.7px;top:148.5px;font-size:9px;line-height:13px;color:#8f8f8f;letter-spacing:-0.315px;">Flushing volumes</div>
<svg class="b" style="left:213.5px;top:150.0px;" width="10" height="10" viewBox="0 0 10 10"><path d="M5 0.8V9.2M0.8 5H9.2" stroke="#555" stroke-width="1.1"/></svg>
<svg class="b" style="left:237.0px;top:150.0px;" width="10" height="10" viewBox="0 0 10 10"><path d="M1 5H9" stroke="#777" stroke-width="1.1"/></svg>
<svg class="b" style="left:266.5px;top:148.5px;" width="14" height="13" viewBox="0 0 14 13"><path d="M1.2 2.2H11V4.4H1.2Z M1.2 4.4V10.6H6.5 M11 4.4V5.6 M3 2.2V1 M9 2.2V1" stroke="#6b6b6b" stroke-width="1" fill="none"/><circle cx="10" cy="9" r="3.1" stroke="#6b6b6b" stroke-width="1" fill="#f7f7f7"/><path d="M8.6 8.3H11.4 M8.6 9.8H11.4" stroke="#6b6b6b" stroke-width="0.8"/></svg>
<svg class="b" style="left:290.5px;top:148.0px;" width="14" height="14" viewBox="0 0 14 14"><path d="M7 0.8L8.6 1.9L10.6 1.7L11.4 3.5L13 4.7L12.4 6.6L13 8.6L11.4 9.8L10.6 11.6L8.6 11.4L7 12.6L5.4 11.4L3.4 11.6L2.6 9.8L1 8.6L1.6 6.6L1 4.7L2.6 3.5L3.4 1.7L5.4 1.9Z" transform="translate(0,0.3)" stroke="#6b6b6b" stroke-width="1" fill="none" stroke-linejoin="round"/><circle cx="7" cy="7" r="2.3" stroke="#6b6b6b" stroke-width="1" fill="none"/></svg>
<div class="b" style="left:6.0px;top:182.8px;width:15.0px;height:14.5px;background:#f7a846;"></div><div class="t" style="left:10.6px;top:183.2px;font-size:10.5px;line-height:14px;color:#3a2a10;">1</div><div class="b" style="left:25.4px;top:181.3px;width:110.0px;height:18.5px;background:#fff;border:1px solid #dbdbdb;box-sizing:border-box;"></div><div class="t" style="left:28.7px;top:183.4px;font-size:10.5px;line-height:14px;color:#323a3d;letter-spacing:-0.302px;">PolyLite PLA</div><svg class="b" style="left:139.5px;top:184.3px;" width="12" height="12" viewBox="0 0 12 12"><path d="M6.5 1.2H2.2Q1 1.2 1 2.4V9.8Q1 11 2.2 11H9.4Q10.6 11 10.6 9.8V6" stroke="#7b7b7b" stroke-width="1" fill="none"/><path d="M5.6 6.6L10.8 1.2" stroke="#7b7b7b" stroke-width="1.1"/></svg>
<div class="b" style="left:163.5px;top:182.8px;width:15.0px;height:14.5px;background:#f40b0b;"></div><div class="t" style="left:168.1px;top:183.2px;font-size:10.5px;line-height:14px;color:#fff;">2</div><div class="b" style="left:182.9px;top:181.3px;width:110.0px;height:18.5px;background:#fff;border:1px solid #dbdbdb;box-sizing:border-box;"></div><div class="t" style="left:186.2px;top:183.4px;font-size:10.5px;line-height:14px;color:#323a3d;letter-spacing:-0.383px;">Bambu PLA Basic</div><svg class="b" style="left:297.0px;top:184.3px;" width="12" height="12" viewBox="0 0 12 12"><path d="M6.5 1.2H2.2Q1 1.2 1 2.4V9.8Q1 11 2.2 11H9.4Q10.6 11 10.6 9.8V6" stroke="#7b7b7b" stroke-width="1" fill="none"/><path d="M5.6 6.6L10.8 1.2" stroke="#7b7b7b" stroke-width="1.1"/></svg>
<div class="b" style="left:6.0px;top:205.1px;width:15.0px;height:14.5px;background:#8a8e90;"></div><div class="t" style="left:10.6px;top:205.5px;font-size:10.5px;line-height:14px;color:#1e1e1e;">3</div><div class="b" style="left:25.4px;top:203.6px;width:110.0px;height:18.5px;background:#fff;border:1px solid #dbdbdb;box-sizing:border-box;"></div><div class="t" style="left:28.7px;top:205.7px;font-size:10.5px;line-height:14px;color:#323a3d;letter-spacing:-0.166px;">Bambu PLA Tough</div><svg class="b" style="left:139.5px;top:206.6px;" width="12" height="12" viewBox="0 0 12 12"><path d="M6.5 1.2H2.2Q1 1.2 1 2.4V9.8Q1 11 2.2 11H9.4Q10.6 11 10.6 9.8V6" stroke="#7b7b7b" stroke-width="1" fill="none"/><path d="M5.6 6.6L10.8 1.2" stroke="#7b7b7b" stroke-width="1.1"/></svg>
<div class="b" style="left:163.5px;top:205.1px;width:15.0px;height:14.5px;background:#101010;"></div><div class="t" style="left:168.1px;top:205.5px;font-size:10.5px;line-height:14px;color:#fff;">4</div><div class="b" style="left:182.9px;top:203.6px;width:110.0px;height:18.5px;background:#fff;border:1px solid #dbdbdb;box-sizing:border-box;"></div><div class="t" style="left:186.2px;top:205.7px;font-size:10.5px;line-height:14px;color:#323a3d;letter-spacing:-0.218px;">Overture PLA</div><svg class="b" style="left:297.0px;top:206.6px;" width="12" height="12" viewBox="0 0 12 12"><path d="M6.5 1.2H2.2Q1 1.2 1 2.4V9.8Q1 11 2.2 11H9.4Q10.6 11 10.6 9.8V6" stroke="#7b7b7b" stroke-width="1" fill="none"/><path d="M5.6 6.6L10.8 1.2" stroke="#7b7b7b" stroke-width="1.1"/></svg>
<div class="b" style="left:0.0px;top:236.5px;width:315.0px;height:22.5px;background:linear-gradient(#f8f8f8,#f2f2f2);"></div>
<svg class="b" style="left:8.0px;top:241.0px;" width="13" height="12" viewBox="0 0 13 12"><path d="M3 1H12L10 3.6H1Z M3 4.6H12L10 7.2H1Z M3 8.2H12L10 10.8H1Z" stroke="#4cb878" stroke-width="1" fill="none" stroke-linejoin="round"/></svg>
<div class="t" style="left:28.7px;top:239.0px;font-size:12px;line-height:16px;color:#323a3d;letter-spacing:-0.564px;">Process</div>
<div class="b" style="left:78.7px;top:239.6px;width:77.0px;height:15.5px;background:#dedede;border-radius:8px;"></div>
<div class="b" style="left:78.7px;top:239.6px;width:39.5px;height:15.5px;background:#00ae42;border-radius:8px;"></div>
<div class="t" style="left:85.5px;top:240.6px;font-size:9.5px;line-height:13px;color:#fff;letter-spacing:-0.244px;">Global</div>
<div class="t" style="left:120.4px;top:240.6px;font-size:9.5px;line-height:13px;color:#8a8a8a;letter-spacing:-0.172px;">Objects</div>
<div class="t" style="left:200.0px;top:238.7px;font-size:12px;line-height:16px;color:#323a3d;letter-spacing:-0.422px;">Advanced</div>
<div class="b" style="left:252.0px;top:241.0px;width:20.0px;height:12.8px;background:#00ae42;border-radius:7px;"></div>
<div class="b" style="left:261.5px;top:242.6px;width:9.6px;height:9.6px;background:#fff;border-radius:5px;"></div>
<svg class="b" style="left:283.0px;top:241.5px;" width="12" height="12" viewBox="0 0 12 12"><rect x="0.6" y="0.6" width="10.8" height="10.8" rx="1.4" stroke="#6b6b6b" stroke-width="1" fill="none"/><path d="M2.6 3.4H3.6 M5 3.4H9.4 M2.6 6H3.6 M5 6H9.4 M2.6 8.6H3.6 M5 8.6H9.4" stroke="#6b6b6b" stroke-width="1"/></svg>
<svg class="b" style="left:298.0px;top:242.0px;" width="11" height="11" viewBox="0 0 11 11"><circle cx="2" cy="2" r="1.3" stroke="#4cc07b" stroke-width="0.9" fill="none"/><circle cx="2" cy="8.6" r="1.3" stroke="#4cc07b" stroke-width="0.9" fill="none"/><path d="M3 3L9.6 8.8 M3 7.8L9.6 1.8 M6 0.8H9.8 M8 9.8H10.2" stroke="#4cc07b" stroke-width="0.9" fill="none"/></svg>
<div class="b" style="left:7.5px;top:268.0px;width:244.0px;height:18.8px;background:#fff;border:1px solid #dbdbdb;box-sizing:border-box;"></div>
<svg class="b" style="left:12.5px;top:275.5px;" width="9" height="6" viewBox="0 0 9 6"><path d="M0.8 0.8L4.5 4.4L8.2 0.8" stroke="#9a9a9a" stroke-width="1" fill="none"/></svg>
<div class="t" style="left:23.7px;top:269.3px;font-size:12px;line-height:16px;color:#323a3d;letter-spacing:-0.398px;">* 0.12mm Fine @BBL X1C</div>
<svg class="b" style="left:259.5px;top:271.5px;transform:rotate(35deg);" width="11" height="11" viewBox="0 0 11 11"><path d="M8.9 6.2A3.9 3.9 0 1 1 6.6 2" stroke="#f0896a" stroke-width="1" fill="none"/><path d="M6 0.6L8.9 2.3L6.6 4.4" stroke="#f0896a" stroke-width="1" fill="none"/></svg>
<svg class="b" style="left:278.5px;top:272.0px;" width="10" height="10" viewBox="0 0 10 10"><path d="M1 1H7L9 3V9H1Z" stroke="#444" stroke-width="1" fill="none"/><path d="M2.6 9V6.2H7.4V9Z" fill="#444"/></svg>
<svg class="b" style="left:296.0px;top:271.5px;" width="12" height="12" viewBox="0 0 12 12"><circle cx="4.6" cy="4.6" r="3.6" stroke="#444" stroke-width="1" fill="none"/><path d="M7.2 7.2L11 11" stroke="#444" stroke-width="1.1"/></svg>
<div class="t" style="left:12.4px;top:299.3px;font-size:12px;line-height:16px;color:#6b6b6b;letter-spacing:-0.050px;">Quality</div>
<div class="t" style="left:71.3px;top:299.3px;font-size:12px;line-height:16px;color:#6b6b6b;letter-spacing:0.079px;">Strength</div>
<div class="t" style="left:139.3px;top:299.3px;font-size:12px;line-height:16px;color:#6b6b6b;letter-spacing:-0.540px;">Speed</div>
<div class="t" style="left:194.0px;top:299.3px;font-size:12px;line-height:16px;color:#f0733f;letter-spacing:0.138px;">Support</div>
<div class="t" style="left:259.6px;top:299.3px;font-size:12px;line-height:16px;color:#6b6b6b;letter-spacing:-0.202px;">Others</div>
<div class="b" style="left:0.0px;top:318.0px;width:315.0px;height:1.0px;background:#d2d2d2;"></div>
<div class="b" style="left:192.5px;top:316.0px;width:46.5px;height:2.0px;background:#00ae42;"></div>
<div class="b" style="left:303.0px;top:323.0px;width:11.0px;height:727.0px;background:#f0f0f0;"></div>
<div class="b" style="left:303.0px;top:336.0px;width:11.0px;height:660.0px;background:#cdcdcd;"></div>
<svg class="b" style="left:304.5px;top:327.5px;" width="8" height="5" viewBox="0 0 8 5"><path d="M0.8 4.2L4 1L7.2 4.2" stroke="#555" stroke-width="1.1" fill="none"/></svg>
<svg class="b" style="left:304.5px;top:1041.0px;" width="8" height="5" viewBox="0 0 8 5"><path d="M0.8 0.8L4 4L7.2 0.8" stroke="#555" stroke-width="1.1" fill="none"/></svg>
<svg class="b" style="left:4.0px;top:327.5px;" width="14" height="13" viewBox="0 0 14 13"><rect x="0.6" y="0.6" width="12.4" height="11.4" rx="1" stroke="#555" stroke-width="1" fill="none"/><path d="M1 5H6.5V12" stroke="#555" stroke-width="1" fill="none"/><path d="M1.5 6H5.5V11.5H1.5Z" fill="#555"/></svg><div class="t" style="left:21.0px;top:326.2px;font-size:11.5px;line-height:15px;color:#2c3436;font-weight:bold;letter-spacing:-0.154px;">Support</div><div class="b" style="left:70.0px;top:334.0px;width:228.0px;height:1.0px;background:#ececec;"></div>
<svg class="b" style="left:4.5px;top:512.0px;" width="13" height="12" viewBox="0 0 13 12"><rect x="0.6" y="0.6" width="11.6" height="10.4" rx="1" stroke="#555" stroke-width="1" fill="none"/><path d="M1 9.6H12" stroke="#555" stroke-width="1.6"/></svg><div class="t" style="left:21.0px;top:510.2px;font-size:11.5px;line-height:15px;color:#2c3436;font-weight:bold;letter-spacing:0.060px;">Raft</div><div class="b" style="left:50.0px;top:518.0px;width:248.0px;height:1.0px;background:#ececec;"></div>
<svg class="b" style="left:4.0px;top:561.5px;" width="13" height="12" viewBox="0 0 13 12"><path d="M2.4 1.2Q0.6 6 2.4 10.8 M10.6 1.2Q12.4 6 10.6 10.8 M4.4 1.5V10.5 M6.5 1.5V10.5 M8.6 1.5V10.5" stroke="#666" stroke-width="1" fill="none"/></svg><div class="t" style="left:21.0px;top:559.9px;font-size:11.5px;line-height:15px;color:#2c3436;font-weight:bold;letter-spacing:-0.213px;">Filament for Supports</div><div class="b" style="left:141.0px;top:567.6px;width:157.0px;height:1.0px;background:#ececec;"></div>
<svg class="b" style="left:3.5px;top:632.5px;" width="14" height="14" viewBox="0 0 14 14"><circle cx="6" cy="6" r="3.6" stroke="#555" stroke-width="1" fill="none" stroke-dasharray="1.6 1.1"/><circle cx="6" cy="6" r="5" stroke="#555" stroke-width="0.8" fill="none"/><circle cx="6" cy="6" r="1.5" stroke="#555" stroke-width="0.8" fill="none"/><circle cx="10" cy="10" r="2.6" stroke="#555" stroke-width="0.9" fill="#fff"/></svg><div class="t" style="left:21.0px;top:631.5px;font-size:11.5px;line-height:15px;color:#2c3436;font-weight:bold;letter-spacing:-0.345px;">Advanced</div><div class="b" style="left:79.0px;top:639.3px;width:219.0px;height:1.0px;background:#ececec;"></div>
<div class="t" style="left:18.5px;top:350.0px;font-size:12px;line-height:16px;color:#f0896a;letter-spacing:-0.123px;">Enable support</div>
<svg class="b" style="left:170.5px;top:352.0px;transform:rotate(35deg);" width="11" height="11" viewBox="0 0 11 11"><path d="M8.9 6.2A3.9 3.9 0 1 1 6.6 2" stroke="#f0896a" stroke-width="1" fill="none"/><path d="M6 0.6L8.9 2.3L6.6 4.4" stroke="#f0896a" stroke-width="1" fill="none"/></svg>
<div class="b" style="left:184.3px;top:351.7px;width:12.5px;height:12.5px;background:#00ae42;border-radius:1.5px;"></div><svg class="b" style="left:186.3px;top:354.7px;" width="9" height="7" viewBox="0 0 9 7"><path d="M0.8 3.2L3.4 5.8L8 1" stroke="#fff" stroke-width="1.3" fill="none"/></svg>
<div class="t" style="left:18.5px;top:372.2px;font-size:12px;line-height:16px;color:#f0896a;letter-spacing:-0.004px;">Type</div>
<svg class="b" style="left:170.5px;top:374.5px;transform:rotate(35deg);" width="11" height="11" viewBox="0 0 11 11"><path d="M8.9 6.2A3.9 3.9 0 1 1 6.6 2" stroke="#f0896a" stroke-width="1" fill="none"/><path d="M6 0.6L8.9 2.3L6.6 4.4" stroke="#f0896a" stroke-width="1" fill="none"/></svg>
<div class="b" style="left:184.0px;top:370.5px;width:89.8px;height:19.0px;background:#fff;border:1px solid #dbdbdb;box-sizing:border-box;"></div><svg class="b" style="left:188.5px;top:377.0px;" width="9" height="6" viewBox="0 0 9 6"><path d="M0.8 0.8L4.5 4.4L8.2 0.8" stroke="#9a9a9a" stroke-width="1" fill="none"/></svg><div class="t" style="left:199.6px;top:372.2px;font-size:12px;line-height:16px;color:#2c3436;">tree(auto)</div>
<div class="t" style="left:18.5px;top:394.6px;font-size:12px;line-height:16px;color:#323a3d;letter-spacing:-0.036px;">Style</div>
<div class="b" style="left:184.0px;top:393.3px;width:89.8px;height:19.0px;background:#fff;border:1px solid #dbdbdb;box-sizing:border-box;"></div><div class="t" style="left:187.6px;top:395.0px;font-size:12px;line-height:16px;color:#2c3436;">Default</div>
<div class="t" style="left:18.5px;top:417.0px;font-size:12px;line-height:16px;color:#323a3d;letter-spacing:-0.117px;">Threshold angle</div>
<div class="b" style="left:184.0px;top:415.5px;width:89.8px;height:19.0px;background:#fff;border:1px solid #dbdbdb;box-sizing:border-box;"></div><svg class="b" style="left:186.8px;top:418.0px;" width="8" height="14" viewBox="0 0 8 14"><path d="M1 4.4L4 1.6L7 4.4 M1 9.6L4 12.4L7 9.6" stroke="#c4c4c4" stroke-width="0.9" fill="none"/></svg><div class="t" style="left:201.9px;top:417.2px;font-size:12px;line-height:16px;color:#2c3436;">20</div><div class="t" style="left:266.5px;top:419.4px;font-size:9.5px;line-height:13px;color:#8e8e8e;">°</div>
<div class="t" style="left:18.5px;top:439.5px;font-size:12px;line-height:16px;color:#323a3d;letter-spacing:-0.021px;">On build plate only</div>
<div class="b" style="left:184.3px;top:441.8px;width:12.5px;height:12.5px;background:#fff;border:1px solid #cfcfcf;box-sizing:border-box;border-radius:1.5px;"></div>
<div class="t" style="left:18.5px;top:462.0px;font-size:12px;line-height:16px;color:#323a3d;letter-spacing:0.007px;">Support critical regions only</div>
<div class="b" style="left:184.3px;top:464.2px;width:12.5px;height:12.5px;background:#fff;border:1px solid #cfcfcf;box-sizing:border-box;border-radius:1.5px;"></div>
<div class="t" style="left:18.5px;top:484.6px;font-size:12px;line-height:16px;color:#323a3d;letter-spacing:-0.263px;">Remove small overhangs</div>
<div class="b" style="left:184.3px;top:486.6px;width:12.5px;height:12.5px;background:#00ae42;border-radius:1.5px;"></div><svg class="b" style="left:186.3px;top:489.6px;" width="9" height="7" viewBox="0 0 9 7"><path d="M0.8 3.2L3.4 5.8L8 1" stroke="#fff" stroke-width="1.3" fill="none"/></svg>
<div class="t" style="left:18.5px;top:534.2px;font-size:12px;line-height:16px;color:#323a3d;letter-spacing:-0.168px;">Raft layers</div>
<div class="b" style="left:184.0px;top:532.7px;width:89.8px;height:19.0px;background:#fff;border:1px solid #dbdbdb;box-sizing:border-box;"></div><svg class="b" style="left:186.8px;top:535.2px;" width="8" height="14" viewBox="0 0 8 14"><path d="M1 4.4L4 1.6L7 4.4 M1 9.6L4 12.4L7 9.6" stroke="#c4c4c4" stroke-width="0.9" fill="none"/></svg><div class="t" style="left:201.9px;top:534.4px;font-size:12px;line-height:16px;color:#2c3436;">0</div><div class="t" style="left:246.3px;top:536.7px;font-size:9.5px;line-height:13px;color:#8e8e8e;letter-spacing:-0.274px;">layers</div>
<div class="t" style="left:18.5px;top:583.7px;font-size:12px;line-height:16px;color:#323a3d;letter-spacing:0.085px;">Support/raft base</div>
<div class="b" style="left:184.0px;top:582.3px;width:89.8px;height:19.0px;background:#fff;border:1px solid #dbdbdb;box-sizing:border-box;"></div><div class="t" style="left:187.6px;top:584.0px;font-size:12px;line-height:16px;color:#2c3436;">Default</div>
<div class="t" style="left:18.5px;top:605.9px;font-size:12px;line-height:16px;color:#323a3d;letter-spacing:0.124px;">Support/raft interface</div>
<div class="b" style="left:184.0px;top:604.5px;width:89.8px;height:19.0px;background:#fff;border:1px solid #dbdbdb;box-sizing:border-box;"></div><div class="t" style="left:187.6px;top:606.2px;font-size:12px;line-height:16px;color:#2c3436;">Default</div>
<div class="t" style="left:18.5px;top:655.9px;font-size:12px;line-height:16px;color:#323a3d;letter-spacing:-0.059px;">Tree support branch</div>
<div class="t" style="left:18.5px;top:669.3px;font-size:12px;line-height:16px;color:#323a3d;letter-spacing:-0.150px;">distance</div>
<div class="b" style="left:184.0px;top:661.4px;width:89.8px;height:18.2px;background:#fff;border:1px solid #dbdbdb;box-sizing:border-box;"></div><div class="t" style="left:189.8px;top:662.7px;font-size:12px;line-height:16px;color:#2c3436;">5</div><div class="t" style="left:251.9px;top:665.0px;font-size:9.5px;line-height:13px;color:#8e8e8e;letter-spacing:-0.714px;">mm</div>
<div class="t" style="left:18.5px;top:691.6px;font-size:12px;line-height:16px;color:#323a3d;letter-spacing:-0.059px;">Tree support branch</div>
<div class="t" style="left:18.5px;top:705.0px;font-size:12px;line-height:16px;color:#323a3d;letter-spacing:-0.086px;">diameter</div>
<div class="b" style="left:184.0px;top:697.4px;width:89.8px;height:18.2px;background:#fff;border:1px solid #dbdbdb;box-sizing:border-box;"></div><div class="t" style="left:189.8px;top:698.7px;font-size:12px;line-height:16px;color:#2c3436;">2</div><div class="t" style="left:251.9px;top:701.0px;font-size:9.5px;line-height:13px;color:#8e8e8e;letter-spacing:-0.714px;">mm</div>
<div class="t" style="left:18.5px;top:727.7px;font-size:12px;line-height:16px;color:#323a3d;letter-spacing:-0.081px;">Tree support branch angle</div>
<div class="b" style="left:184.0px;top:726.5px;width:89.8px;height:19.0px;background:#fff;border:1px solid #dbdbdb;box-sizing:border-box;"></div><div class="t" style="left:189.8px;top:728.2px;font-size:12px;line-height:16px;color:#2c3436;">45</div><div class="t" style="left:263.0px;top:730.5px;font-size:9.5px;line-height:13px;color:#8e8e8e;">°</div>
<div class="t" style="left:18.5px;top:750.0px;font-size:12px;line-height:16px;color:#323a3d;letter-spacing:-0.027px;">Tree support wall loops</div>
<div class="b" style="left:184.0px;top:748.7px;width:89.8px;height:19.0px;background:#fff;border:1px solid #dbdbdb;box-sizing:border-box;"></div><svg class="b" style="left:186.8px;top:751.2px;" width="8" height="14" viewBox="0 0 8 14"><path d="M1 4.4L4 1.6L7 4.4 M1 9.6L4 12.4L7 9.6" stroke="#c4c4c4" stroke-width="0.9" fill="none"/></svg><div class="t" style="left:202.8px;top:750.4px;font-size:12px;line-height:16px;color:#2c3436;">1</div>
<div class="t" style="left:18.5px;top:772.7px;font-size:12px;line-height:16px;color:#323a3d;letter-spacing:0.078px;">Tree support brim width</div>
<div class="b" style="left:184.0px;top:771.3px;width:89.8px;height:19.0px;background:#fff;border:1px solid #dbdbdb;box-sizing:border-box;"></div><div class="t" style="left:189.8px;top:773.0px;font-size:12px;line-height:16px;color:#2c3436;">0</div><div class="t" style="left:251.9px;top:775.2px;font-size:9.5px;line-height:13px;color:#8e8e8e;letter-spacing:-0.714px;">mm</div>
<div class="t" style="left:18.5px;top:795.3px;font-size:12px;line-height:16px;color:#323a3d;letter-spacing:-0.082px;">Top Z distance</div>
<div class="b" style="left:184.0px;top:793.9px;width:89.8px;height:19.0px;background:#fff;border:1px solid #dbdbdb;box-sizing:border-box;"></div><div class="t" style="left:189.8px;top:795.6px;font-size:12px;line-height:16px;color:#2c3436;">0.2</div><div class="t" style="left:251.9px;top:797.9px;font-size:9.5px;line-height:13px;color:#8e8e8e;letter-spacing:-0.714px;">mm</div>
<div class="t" style="left:18.5px;top:817.7px;font-size:12px;line-height:16px;color:#323a3d;letter-spacing:-0.024px;">Bottom Z distance</div>
<div class="b" style="left:184.0px;top:816.5px;width:89.8px;height:19.0px;background:#fff;border:1px solid #dbdbdb;box-sizing:border-box;"></div><div class="t" style="left:189.8px;top:818.2px;font-size:12px;line-height:16px;color:#2c3436;">0.2</div><div class="t" style="left:251.9px;top:820.5px;font-size:9.5px;line-height:13px;color:#8e8e8e;letter-spacing:-0.714px;">mm</div>
<div class="t" style="left:18.5px;top:840.3px;font-size:12px;line-height:16px;color:#323a3d;letter-spacing:-0.112px;">Base pattern</div>
<div class="b" style="left:184.0px;top:839.0px;width:89.8px;height:19.0px;background:#fff;border:1px solid #dbdbdb;box-sizing:border-box;"></div><div class="t" style="left:187.6px;top:840.7px;font-size:12px;line-height:16px;color:#2c3436;">Default</div>
<div class="t" style="left:18.5px;top:863.0px;font-size:12px;line-height:16px;color:#323a3d;letter-spacing:-0.157px;">Base pattern spacing</div>
<div class="b" style="left:184.0px;top:861.5px;width:89.8px;height:19.0px;background:#fff;border:1px solid #dbdbdb;box-sizing:border-box;"></div><div class="t" style="left:189.8px;top:863.2px;font-size:12px;line-height:16px;color:#2c3436;">2.5</div><div class="t" style="left:251.9px;top:865.5px;font-size:9.5px;line-height:13px;color:#8e8e8e;letter-spacing:-0.714px;">mm</div>
<div class="t" style="left:18.5px;top:885.0px;font-size:12px;line-height:16px;color:#323a3d;letter-spacing:-0.053px;">Pattern angle</div>
<div class="b" style="left:184.0px;top:883.8px;width:89.8px;height:19.0px;background:#fff;border:1px solid #dbdbdb;box-sizing:border-box;"></div><div class="t" style="left:189.8px;top:885.5px;font-size:12px;line-height:16px;color:#2c3436;">0</div><div class="t" style="left:263.0px;top:887.8px;font-size:9.5px;line-height:13px;color:#8e8e8e;">°</div>
<div class="t" style="left:18.5px;top:907.6px;font-size:12px;line-height:16px;color:#323a3d;letter-spacing:-0.063px;">Top interface layers</div>
<div class="b" style="left:184.0px;top:906.3px;width:89.8px;height:19.0px;background:#fff;border:1px solid #dbdbdb;box-sizing:border-box;"></div><svg class="b" style="left:188.5px;top:912.8px;" width="9" height="6" viewBox="0 0 9 6"><path d="M0.8 0.8L4.5 4.4L8.2 0.8" stroke="#9a9a9a" stroke-width="1" fill="none"/></svg><div class="t" style="left:201.9px;top:908.0px;font-size:12px;line-height:16px;color:#2c3436;">2</div><div class="t" style="left:242.6px;top:910.2px;font-size:9.5px;line-height:13px;color:#8e8e8e;letter-spacing:-0.274px;">layers</div>
<div class="t" style="left:18.5px;top:930.0px;font-size:12px;line-height:16px;color:#323a3d;letter-spacing:0.012px;">Interface pattern</div>
<div class="b" style="left:184.0px;top:928.8px;width:89.8px;height:19.0px;background:#fff;border:1px solid #dbdbdb;box-sizing:border-box;"></div><div class="t" style="left:187.6px;top:930.5px;font-size:12px;line-height:16px;color:#2c3436;">Default</div>
<div class="t" style="left:18.5px;top:953.0px;font-size:12px;line-height:16px;color:#323a3d;letter-spacing:-0.081px;">Top interface spacing</div>
<div class="b" style="left:184.0px;top:951.5px;width:89.8px;height:19.0px;background:#fff;border:1px solid #dbdbdb;box-sizing:border-box;"></div><div class="t" style="left:189.8px;top:953.2px;font-size:12px;line-height:16px;color:#2c3436;">0.5</div><div class="t" style="left:251.9px;top:955.5px;font-size:9.5px;line-height:13px;color:#8e8e8e;letter-spacing:-0.714px;">mm</div>
<div class="t" style="left:18.5px;top:975.0px;font-size:12px;line-height:16px;color:#323a3d;letter-spacing:-0.103px;">Normal support expansion</div>
<div class="b" style="left:184.0px;top:973.9px;width:89.8px;height:19.0px;background:#fff;border:1px solid #dbdbdb;box-sizing:border-box;"></div><div class="t" style="left:189.8px;top:975.6px;font-size:12px;line-height:16px;color:#2c3436;">0</div><div class="t" style="left:251.9px;top:977.9px;font-size:9.5px;line-height:13px;color:#8e8e8e;letter-spacing:-0.714px;">mm</div>
<div class="t" style="left:18.5px;top:997.7px;font-size:12px;line-height:16px;color:#323a3d;letter-spacing:-0.013px;">Support/object xy distance</div>
<div class="b" style="left:184.0px;top:996.5px;width:89.8px;height:19.0px;background:#fff;border:1px solid #dbdbdb;box-sizing:border-box;"></div><div class="t" style="left:189.8px;top:998.2px;font-size:12px;line-height:16px;color:#2c3436;">0.35</div><div class="t" style="left:251.9px;top:1000.5px;font-size:9.5px;line-height:13px;color:#8e8e8e;letter-spacing:-0.714px;">mm</div>
<div class="t" style="left:18.5px;top:1020.0px;font-size:12px;line-height:16px;color:#323a3d;letter-spacing:-0.082px;">Max bridge length</div>
<div class="b" style="left:184.0px;top:1018.8px;width:89.8px;height:19.0px;background:#fff;border:1px solid #dbdbdb;box-sizing:border-box;"></div><div class="t" style="left:189.8px;top:1020.5px;font-size:12px;line-height:16px;color:#2c3436;">10</div><div class="t" style="left:251.9px;top:1022.8px;font-size:9.5px;line-height:13px;color:#8e8e8e;letter-spacing:-0.714px;">mm</div>
<div class="t" style="left:18.5px;top:1043.0px;font-size:12px;line-height:16px;color:#323a3d;letter-spacing:-0.018px;">Independent support layer</div></div>
<div class="b" style="left:0.0px;top:0.0px;width:1920.0px;height:22.0px;background:#262e30;"></div>
<div class="b" style="left:0.0px;top:0.0px;width:1920.0px;height:1.0px;background:#0c0f10;"></div>
<div class="b" style="left:0.0px;top:22.0px;width:1920.0px;height:1.0px;background:#1d2325;"></div>
<svg class="b" style="left:10.0px;top:5.0px;" width="13" height="12" viewBox="0 0 13 12"><path d="M0.5 1.5H12.5M0.5 6H12.5M0.5 10.5H12.5" stroke="#fff" stroke-width="1.4" fill="none"/></svg>
<div class="t" style="left:25.5px;top:4.8px;font-size:10.5px;line-height:14px;color:#fff;letter-spacing:-0.730px;">File</div>
<svg class="b" style="left:55.0px;top:8.0px;" width="10" height="7" viewBox="0 0 10 7"><path d="M1 1.2L5 5.2L9 1.2" stroke="#fff" stroke-width="1.2" fill="none"/></svg>
<div class="b" style="left:79.0px;top:3.0px;width:1.0px;height:17.0px;background:#4a5254;"></div>
<svg class="b" style="left:96.5px;top:5.0px;" width="12" height="12" viewBox="0 0 12 12"><path d="M1 1H8L11 4V11H1Z" stroke="#fff" stroke-width="1.1" fill="none"/><path d="M3 11V7.5H9V11Z" fill="#fff"/><path d="M3.3 1V3.8H7V1" stroke="#fff" stroke-width="1" fill="none"/></svg>
<svg class="b" style="left:125.5px;top:5.5px;" width="13" height="11" viewBox="0 0 13 11"><path d="M5.5 1L0.5 5.5L5.5 10V7.2C8.5 7 10.5 8 12 10.5C11.8 6.5 9.5 4 5.5 3.8Z" fill="#fff"/></svg>
<svg class="b" style="left:155.0px;top:5.5px;transform:scaleX(-1);" width="13" height="11" viewBox="0 0 13 11"><path d="M5.5 1L0.5 5.5L5.5 10V7.2C8.5 7 10.5 8 12 10.5C11.8 6.5 9.5 4 5.5 3.8Z" fill="#fff"/></svg>
<div class="t" style="left:978.5px;top:5.7px;font-size:9px;line-height:13px;color:#e6e8e8;letter-spacing:-0.169px;">RX7 Model</div>
<div class="b" style="left:1851.0px;top:10.0px;width:8.0px;height:1.0px;background:#cfd2d2;"></div>
<svg class="b" style="left:1874.0px;top:6.0px;" width="12" height="11" viewBox="0 0 12 11"><rect x="0.6" y="0.6" width="7" height="6" stroke="#d8dada" stroke-width="1.1" fill="none"/><rect x="3.6" y="3.6" width="7.4" height="6.4" stroke="#d8dada" stroke-width="1.1" fill="#262e30"/></svg>
<svg class="b" style="left:1901.0px;top:7.0px;" width="9" height="9" viewBox="0 0 9 9"><path d="M1 1L8 8M8 1L1 8" stroke="#d8dada" stroke-width="1.1" fill="none"/></svg>
<div class="b" style="left:0.0px;top:23.0px;width:1920.0px;height:27.0px;background:#3b4446;"></div>
<div class="b" style="left:31.0px;top:23.0px;width:102.0px;height:27.0px;background:#00ae42;"></div>
<svg class="b" style="left:8.0px;top:28.5px;" width="15" height="15" viewBox="0 0 15 15"><path d="M7.5 0.5L0.3 7.2H2.3V14.3H6V9.5H9V14.3H12.7V7.2H14.7Z" fill="#fff"/></svg>
<svg class="b" style="left:51.0px;top:29.5px;" width="13" height="14" viewBox="0 0 13 14"><path d="M6.5 0.8L12.2 3.8V10.2L6.5 13.2L0.8 10.2V3.8Z" stroke="#e9fff0" stroke-width="1.1" fill="none"/><path d="M0.8 3.8L6.5 7L12.2 3.8" stroke="#e9fff0" stroke-width="1.1" fill="none"/></svg>
<div class="t" style="left:72.0px;top:29.0px;font-size:12.5px;line-height:16px;color:#f0fff4;letter-spacing:-0.496px;">Prepare</div>
<svg class="b" style="left:153.0px;top:29.5px;" width="13" height="14" viewBox="0 0 13 14"><path d="M6.5 0.8L12.2 3.6L6.5 6.4L0.8 3.6Z M0.8 6.8L6.5 9.6L12.2 6.8 M0.8 10L6.5 12.8L12.2 10" stroke="#e8eaea" stroke-width="1.1" fill="none"/></svg>
<div class="t" style="left:174.0px;top:29.0px;font-size:12.5px;line-height:16px;color:#eef0f0;letter-spacing:-0.494px;">Preview</div>
<svg class="b" style="left:257.5px;top:30.0px;" width="14" height="14" viewBox="0 0 14 14"><path d="M1 1H7V4.6H1Z M4 4.6V6.6 M2.2 6.8H5.8 M9 1H12.6V4 M1 9V12.6H4 M8.2 8.2H12.6V12.6H8.2Z M9.6 10.4H11.2" stroke="#e8eaea" stroke-width="1.1" fill="none"/></svg>
<div class="t" style="left:279.0px;top:29.0px;font-size:12.5px;line-height:16px;color:#eef0f0;letter-spacing:-0.535px;">Device</div>
<svg class="b" style="left:359.5px;top:30.5px;" width="14" height="12" viewBox="0 0 14 12"><rect x="0.7" y="0.7" width="12.4" height="10.6" rx="1.2" stroke="#e8eaea" stroke-width="1.1" fill="none"/><path d="M3 3.5H4 M5.5 3.5H11 M3 6H4 M5.5 6H11 M3 8.5H4 M5.5 8.5H11" stroke="#e8eaea" stroke-width="1.1"/></svg>
<div class="t" style="left:380.5px;top:29.0px;font-size:12.5px;line-height:16px;color:#eef0f0;letter-spacing:-0.415px;">Project</div>
<svg class="b" style="left:450.5px;top:30.0px;" width="14" height="14" viewBox="0 0 14 14"><path d="M1 1H7V4.6H1Z M4 4.6V6.6 M2.2 6.8H5.8 M9 1H12.6V4 M1 9V12.6H4 M8.2 8.2H12.6V12.6H8.2Z M9.6 10.4H11.2" stroke="#e8eaea" stroke-width="1.1" fill="none"/></svg>
<div class="t" style="left:472.0px;top:29.0px;font-size:12.5px;line-height:16px;color:#eef0f0;letter-spacing:-0.251px;">Calibration</div>
<div class="b" style="left:1571.0px;top:27.8px;width:94.0px;height:18.2px;background:#00ae42;border-radius:10px;"></div>
<svg class="b" style="left:1592.0px;top:31.2px;" width="11" height="11" viewBox="0 0 11 11"><path d="M5.5 7.5V1.2 M3 3.4L5.5 1L8 3.4 M1 6.5V10H10V6.5" stroke="#fff" stroke-width="1.2" fill="none"/></svg>
<div class="t" style="left:1607.0px;top:29.0px;font-size:12.5px;line-height:16px;color:#fff;letter-spacing:-0.269px;">Upload</div>
<div class="b" style="left:1676.0px;top:27.8px;width:101.5px;height:18.2px;background:#6b6b6b;border-radius:10px;"></div>
<div class="b" style="left:1676.0px;top:27.8px;width:18.5px;height:18.2px;background:#00ae42;border-radius:10px 0 0 10px;"></div>
<div class="b" style="left:1694.5px;top:27.8px;width:1.0px;height:18.2px;background:#3b4446;"></div>
<svg class="b" style="left:1683.0px;top:35.3px;" width="7" height="5" viewBox="0 0 7 5"><path d="M0.8 1L3.5 3.4L6.2 1" stroke="#fff" stroke-width="1.1" fill="none"/></svg>
<div class="t" style="left:1706.5px;top:29.0px;font-size:12.5px;line-height:16px;color:#a6a8a8;letter-spacing:-0.334px;">Slice plate</div>
<div class="b" style="left:1789.0px;top:27.8px;width:102.0px;height:18.2px;background:#00ae42;border-radius:10px;"></div>
<div class="b" style="left:1807.0px;top:27.8px;width:1.0px;height:18.2px;background:#3b4446;"></div>
<svg class="b" style="left:1795.5px;top:35.3px;" width="7" height="5" viewBox="0 0 7 5"><path d="M0.8 1L3.5 3.4L6.2 1" stroke="#fff" stroke-width="1.1" fill="none"/></svg>
<div class="t" style="left:1819.5px;top:29.0px;font-size:12.5px;line-height:16px;color:#fff;letter-spacing:-0.117px;">Print plate</div>
<div class="b" style="left:0.0px;top:1050.0px;width:1920.0px;height:30.0px;background:#ede9e4;"></div>
<svg class="b" style="left:12.0px;top:1059.0px;" width="13" height="13" viewBox="0 0 13 13"><path d="M0 1.8L5.6 1V6H0Z M6.4 0.9L13 0V6H6.4Z M0 6.8H5.6V11.8L0 11Z M6.4 6.8H13V12.8L6.4 11.9Z" fill="#111"/></svg>
<div class="b" style="left:36.5px;top:1050.5px;width:215.5px;height:29.5px;background:#fff;border:1px solid #d8d5d2;box-sizing:border-box;"></div>
<svg class="b" style="left:43.0px;top:1058.0px;" width="15" height="15" viewBox="0 0 15 15"><circle cx="9" cy="5.6" r="4.3" stroke="#222" stroke-width="1.2" fill="none"/><path d="M5.8 8.8L1 13.6" stroke="#222" stroke-width="1.3"/></svg>
<div class="t" style="left:66.0px;top:1057.8px;font-size:11.5px;line-height:15px;color:#3a3a3a;letter-spacing:-0.297px;">Type here to search</div>
<svg class="b" style="left:203.0px;top:1050.5px;" width="49" height="29" viewBox="0 0 49 29"><rect x="0" y="0" width="49" height="29" fill="#fff"/><path d="M0 29V9L4 5L9 8L14 4L22 7L30 3L38 1L44 0H49V29Z" fill="#c9ad84"/><path d="M0 29V15L8 12L14 16L20 29Z" fill="#b39468"/><path d="M24 8L34 6L36 29H22Z" fill="#e3d5bb"/><path d="M36 3L46 1L47 29H36Z" fill="#d6bf97"/><path d="M38 0L48 -1V3L38 4Z" fill="#b9754a"/><path d="M30 12Q34 8 36 13Q37 18 33 19Q29 17 30 12Z" fill="#6c8f44"/><path d="M12 22Q16 19 19 23L20 29H10Z" fill="#56793a"/><path d="M14 24Q17 22 18 26L18 29H14Z" fill="#2e7d9a"/></svg>
<svg class="b" style="left:263.5px;top:1058.5px;" width="14" height="14" viewBox="0 0 14 14"><rect x="1.2" y="3.2" width="8" height="7.6" stroke="#222" stroke-width="1.1" fill="none"/><path d="M0.6 0.8H9.8 M0.6 13.2H9.8 M12.6 2.8V4.6 M12.6 6.4V11.2" stroke="#222" stroke-width="1.1"/></svg>
<svg class="b" style="left:299.5px;top:1057.0px;" width="18" height="16" viewBox="0 0 18 16"><path d="M0.5 2.2Q0.5 1 1.7 1H6L7.6 2.6H16.3Q17.5 2.6 17.5 3.8V13H0.5Z" fill="#f4b93a"/><path d="M0.5 5.2H17.5V14Q17.5 15 16.5 15H1.5Q0.5 15 0.5 14Z" fill="#fbd56b"/><path d="M4 10H14V15H4Z" fill="#4b87d6"/><path d="M6.6 12.5H11.4V15H6.6Z" fill="#fbd56b"/></svg>
<svg class="b" style="left:335.5px;top:1057.5px;" width="19" height="16" viewBox="0 0 19 16"><path d="M0.5 5.6L9.5 0.4L18.5 5.6V15.6H0.5Z" fill="#1c73c9"/><path d="M2 5.8H17V11H2Z" fill="#e9f2fb"/><path d="M0.5 6.2L9.5 11.6L18.5 6.2V15.6H0.5Z" fill="#2f96e8"/></svg>
<svg class="b" style="left:371.5px;top:1055.5px;" width="20" height="20" viewBox="0 0 20 20"><circle cx="10" cy="10" r="9.6" fill="#e74335"/><path d="M10 10L1.7 5.2A9.6 9.6 0 0 0 9 19.55L13.5 12Z" fill="#2ea54e"/><path d="M10 10L13.6 12L9 19.55A9.6 9.6 0 0 0 18.3 5.2H10Z" fill="#f9bc15"/><circle cx="10" cy="10" r="4.5" fill="#fff"/><circle cx="10" cy="10" r="3.6" fill="#4285f4"/></svg>
<div class="b" style="left:366.0px;top:1078.0px;width:32.0px;height:2.0px;background:#1f6fd0;"></div>
<div class="b" style="left:400.0px;top:1050.0px;width:34.0px;height:28.0px;background:#f6f4f2;"></div>
<svg class="b" style="left:408.5px;top:1055.5px;" width="20" height="20" viewBox="0 0 20 20"><rect x="0" y="0" width="20" height="20" rx="3.4" fill="#0bb04a"/><path d="M5.4 3.6H9.2V8.6L5.4 7Z M10.8 3.6H14.6V7L10.8 8.6Z M5.4 8.8L9.2 10.4V16.4H5.4Z M10.8 10.4L14.6 8.8V16.4H10.8Z" fill="#fff"/></svg>
<div class="b" style="left:400.0px;top:1078.0px;width:35.0px;height:2.0px;background:#1f6fd0;"></div>
<svg class="b" style="left:1621.5px;top:1055.0px;" width="22" height="20" viewBox="0 0 22 20"><circle cx="8" cy="11" r="6.5" fill="#f59c1a"/><path d="M1 9Q1 6.2 4 6.2Q5 3.6 8 4.4Q10.4 3.6 11 6.6Q12.6 7 12 9Z" fill="#cfd7e2"/><path d="M7 18Q7 15 10 15Q11 12.6 14 13.4Q16.6 13 17 15.6Q19 16 18.4 18Z" fill="#c6d0de"/><circle cx="13.8" cy="6" r="4" fill="#d9271d"/><path d="M13.3 4.2L14.3 3.6V8.4" stroke="#fff" stroke-width="1" fill="none"/></svg>
<div class="t" style="left:1645.5px;top:1057.8px;font-size:11px;line-height:15px;color:#2b2b2b;letter-spacing:-0.589px;">76°F</div>
<div class="t" style="left:1672.5px;top:1057.8px;font-size:11px;line-height:15px;color:#2b2b2b;letter-spacing:-0.377px;">Partly sunny</div>
<svg class="b" style="left:1746.0px;top:1062.0px;" width="10" height="6" viewBox="0 0 10 6"><path d="M0.8 5.2L5 1L9.2 5.2" stroke="#222" stroke-width="1.2" fill="none"/></svg>
<svg class="b" style="left:1764.0px;top:1058.5px;" width="11" height="13" viewBox="0 0 11 13"><rect x="1" y="2.8" width="6.4" height="7.4" rx="1.4" stroke="#333" stroke-width="1" fill="none"/><path d="M7.4 5.4L10 4V9L7.4 7.6 M2 0.8H6.4 M2 12.2H6.4" stroke="#333" stroke-width="1" fill="none"/></svg>
<svg class="b" style="left:1780.5px;top:1059.5px;" width="13" height="9" viewBox="0 0 13 9"><path d="M3.4 8.2Q0.6 8.2 0.6 5.8Q0.6 3.6 3 3.4Q3.8 0.8 6.6 0.8Q9.2 0.8 10 3.2Q12.4 3.4 12.4 5.8Q12.4 8.2 10 8.2Z" stroke="#333" stroke-width="1" fill="#999"/></svg>
<svg class="b" style="left:1800.0px;top:1058.5px;" width="12" height="12" viewBox="0 0 12 12"><path d="M1 11A10 10 0 0 1 11 1 M3.6 11A7.4 7.4 0 0 1 11 3.6 M6.2 11A4.8 4.8 0 0 1 11 6.2" stroke="#555" stroke-width="1" fill="none"/><path d="M8.4 11L11 8.4V11Z" fill="#333"/></svg>
<svg class="b" style="left:1816.5px;top:1058.5px;" width="13" height="12" viewBox="0 0 13 12"><path d="M0.8 4.2H3L6 1.4V10.6L3 7.8H0.8Z" stroke="#222" stroke-width="1" fill="none"/><path d="M7.8 4Q9 6 7.8 8 M9.4 2.6Q11.4 6 9.4 9.4 M11 1.4Q13.6 6 11 10.6" stroke="#444" stroke-width="0.9" fill="none"/></svg>
<div class="t" style="left:1840.5px;top:1051.2px;font-size:9.5px;line-height:13px;color:#2b2b2b;letter-spacing:-0.554px;">5:12 PM</div>
<div class="t" style="left:1835.0px;top:1064.8px;font-size:9.5px;line-height:13px;color:#2b2b2b;letter-spacing:-0.455px;">10/14/2023</div>
<svg class="b" style="left:1888.5px;top:1058.0px;" width="15" height="14" viewBox="0 0 15 14"><path d="M0.6 0.6H12.4V9.2H5.2L2.6 11.6V9.2H0.6Z" fill="#1a1a1a"/><path d="M2.4 3H10.6 M2.4 5H10.6 M2.4 7H8" stroke="#ede9e4" stroke-width="0.7"/></svg>
<div class="b" style="left:1895.5px;top:1064.5px;width:11.0px;height:11.0px;background:#ede9e4;border:1px solid #8b8b8b;box-sizing:border-box;border-radius:6px;"></div>
<div class="t" style="left:1898.7px;top:1064.2px;font-size:8px;line-height:12px;color:#222;">8</div>
<div class="b" style="left:1914.5px;top:1050.0px;width:1.0px;height:30.0px;background:#c9c6c3;"></div>
</body></html>
